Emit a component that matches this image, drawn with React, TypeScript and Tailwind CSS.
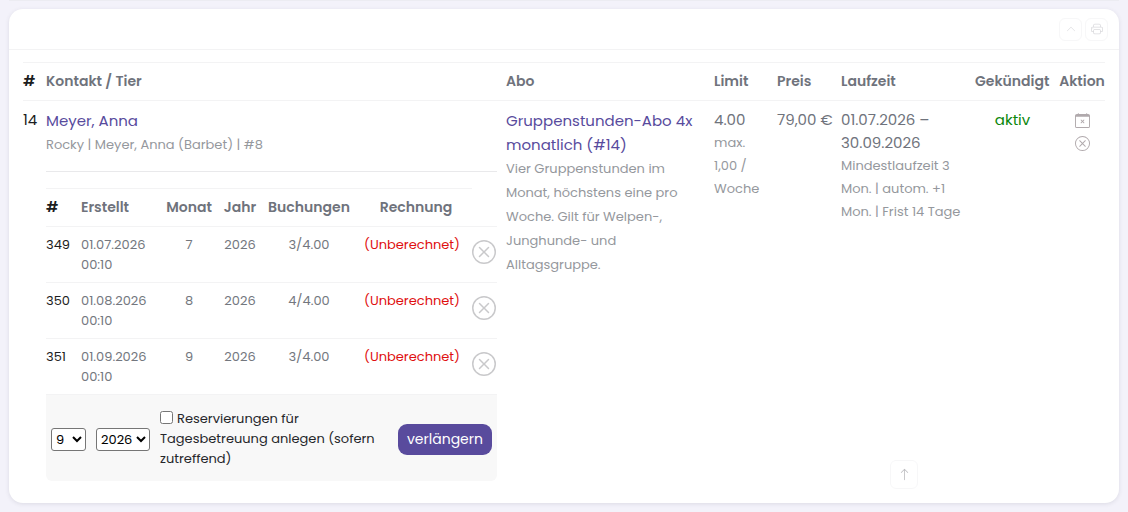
import React from "react";

type Booking = {
  id: number;
  date: string;
  time: string;
  month: number;
  year: number;
  used: string;
};

const bookings: Booking[] = [
  { id: 349, date: "01.07.2026", time: "00:10", month: 7, year: 2026, used: "3/4.00" },
  { id: 350, date: "01.08.2026", time: "00:10", month: 8, year: 2026, used: "4/4.00" },
  { id: 351, date: "01.09.2026", time: "00:10", month: 9, year: 2026, used: "3/4.00" },
];

function CircleX({ className }: { className: string }) {
  return (
    <svg className={className} viewBox="0 0 16 16" fill="currentColor" aria-hidden="true">
      <path d="M8 15A7 7 0 1 1 8 1a7 7 0 0 1 0 14m0 1A8 8 0 1 0 8 0a8 8 0 0 0 0 16" />
      <path d="M4.646 4.646a.5.5 0 0 1 .708 0L8 7.293l2.646-2.647a.5.5 0 0 1 .708.708L8.707 8l2.647 2.646a.5.5 0 0 1-.708.708L8 8.707l-2.646 2.647a.5.5 0 0 1-.708-.708L7.293 8 4.646 5.354a.5.5 0 0 1 0-.708" />
    </svg>
  );
}

function CalendarX({ className }: { className: string }) {
  return (
    <svg className={className} viewBox="0 0 16 16" fill="currentColor" aria-hidden="true">
      <path d="M6.146 7.146a.5.5 0 0 1 .708 0L8 8.293l1.146-1.147a.5.5 0 1 1 .708.708L8.707 9l1.147 1.146a.5.5 0 0 1-.708.708L8 9.707l-1.146 1.147a.5.5 0 0 1-.708-.708L7.293 9 6.146 7.854a.5.5 0 0 1 0-.708" />
      <path d="M3.5 0a.5.5 0 0 1 .5.5V1h8V.5a.5.5 0 0 1 1 0V1h1a2 2 0 0 1 2 2v11a2 2 0 0 1-2 2H2a2 2 0 0 1-2-2V3a2 2 0 0 1 2-2h1V.5a.5.5 0 0 1 .5-.5M1 4v10a1 1 0 0 0 1 1h12a1 1 0 0 0 1-1V4z" />
    </svg>
  );
}

function Printer({ className }: { className: string }) {
  return (
    <svg className={className} viewBox="0 0 16 16" fill="currentColor" aria-hidden="true">
      <path d="M2.5 8a.5.5 0 1 0 0-1 .5.5 0 0 0 0 1" />
      <path d="M5 1a2 2 0 0 0-2 2v2H2a2 2 0 0 0-2 2v3a2 2 0 0 0 2 2h1v1a2 2 0 0 0 2 2h6a2 2 0 0 0 2-2v-1h1a2 2 0 0 0 2-2V7a2 2 0 0 0-2-2h-1V3a2 2 0 0 0-2-2zM4 3a1 1 0 0 1 1-1h6a1 1 0 0 1 1 1v2H4zm1 5a2 2 0 0 0-2 2v1H2a1 1 0 0 1-1-1V7a1 1 0 0 1 1-1h12a1 1 0 0 1 1 1v3a1 1 0 0 1-1 1h-1v-1a2 2 0 0 0-2-2zm7 2v3a1 1 0 0 1-1 1H5a1 1 0 0 1-1-1v-3a1 1 0 0 1 1-1h6a1 1 0 0 1 1 1" />
    </svg>
  );
}

function ChevronUp({ className }: { className: string }) {
  return (
    <svg className={className} viewBox="0 0 16 16" fill="currentColor" aria-hidden="true">
      <path d="M7.646 4.646a.5.5 0 0 1 .708 0l6 6a.5.5 0 0 1-.708.708L8 5.707l-5.646 5.647a.5.5 0 0 1-.708-.708z" />
    </svg>
  );
}

function ArrowUp({ className }: { className: string }) {
  return (
    <svg className={className} viewBox="0 0 16 16" fill="currentColor" aria-hidden="true">
      <path d="M8 15a.5.5 0 0 0 .5-.5V2.707l3.146 3.147a.5.5 0 0 0 .708-.708l-4-4a.5.5 0 0 0-.708 0l-4 4a.5.5 0 1 0 .708.708L7.5 2.707V14.5a.5.5 0 0 0 .5.5" />
    </svg>
  );
}

function BookingTable() {
  return (
    <table className="w-full table-fixed border-collapse text-[13px] leading-5 text-[#73777e]">
      <colgroup>
        <col className="w-[35px]" />
        <col />
        <col className="w-[66px]" />
        <col className="w-[36px]" />
        <col className="w-[102px]" />
        <col className="w-[112px]" />
        <col className="w-[25px]" />
      </colgroup>
      <thead>
        <tr className="h-[38px] text-center text-sm text-[#6f737c]">
          <th className="border-y border-[#f3f3f4] p-0 pb-0.5 text-left font-semibold text-[#1c1d21]">#</th>
          <th className="border-y border-[#f3f3f4] p-0 pb-0.5 text-left font-semibold">Erstellt</th>
          <th className="border-y border-[#f3f3f4] p-0 pb-0.5 font-semibold">Monat</th>
          <th className="border-y border-[#f3f3f4] p-0 pb-0.5 font-semibold">Jahr</th>
          <th className="border-y border-[#f3f3f4] p-0 pb-0.5 font-semibold">Buchungen</th>
          <th className="border-y border-[#f3f3f4] p-0 pb-0.5 font-semibold">Rechnung</th>
          <td className="border-b border-[#f3f3f4] p-0" />
        </tr>
      </thead>
      <tbody>
        {bookings.map((b) => (
          <tr key={b.id} className="border-b border-[#f3f3f4] text-center align-top">
            <td className="pt-2 pb-[7px] text-left text-[#1c1d21]">{b.id}</td>
            <td className="pt-2 pb-[7px] text-left">
              {b.date}
              <br />
              {b.time}
            </td>
            <td className="pt-2 pb-[7px]">{b.month}</td>
            <td className="pt-2 pb-[7px]">{b.year}</td>
            <td className="pt-2 pb-[7px]">{b.used}</td>
            <td className="pt-2 pr-2 pb-[7px] text-[#e01010]">(Unberechnet)</td>
            <td className="pt-[13px]">
              <button type="button" aria-label={`Buchung ${b.id} löschen`} className="block text-[#c9c9cb]">
                <CircleX className="size-6" />
              </button>
            </td>
          </tr>
        ))}
      </tbody>
    </table>
  );
}

function ExtendForm() {
  return (
    <form
      className="flex items-center rounded-b-md bg-[#f8f8f8] px-[5px] pt-[14px] pb-3 text-[13px] leading-5 text-[#26272b]"
      onSubmit={(e) => e.preventDefault()}
    >
      <select
        aria-label="Monat"
        defaultValue="9"
        className="h-[23px] w-[35px] rounded-[3px] border border-[#767676] bg-white text-[13px] text-black"
      >
        <option>7</option>
        <option>8</option>
        <option>9</option>
      </select>
      <select
        aria-label="Jahr"
        defaultValue="2026"
        className="ml-[10px] h-[23px] w-[54px] rounded-[3px] border border-[#767676] bg-white text-[13px] text-black"
      >
        <option>2026</option>
        <option>2027</option>
      </select>
      <label className="ml-[10px] min-w-0 flex-1 pr-4">
        <input type="checkbox" className="mr-1 size-[13px] align-[-1px]" />
        Reservierungen für
        <br />
        Tagesbetreuung anlegen (sofern zutreffend)
      </label>
      <button type="submit" className="h-[31px] w-[94px] rounded-[9px] bg-[#594b9d] text-sm text-white">
        verlängern
      </button>
    </form>
  );
}

export default function App() {
  return (
    <div className="min-h-screen bg-[#f3f2fa] px-[9px] pb-[9px] font-[Poppins,Inter,sans-serif]">
      <div className="h-px bg-[#ececf2]" />
      <main className="mt-2 rounded-[14px] bg-white pb-[22px] shadow-[0_1px_4px_rgba(60,60,70,0.12)]">
        <header className="flex h-[41px] items-center justify-end gap-[3px] border-b border-[#f3f3f4] pr-[11px]">
          <button
            type="button"
            aria-label="Einklappen"
            className="flex size-[23px] items-center justify-center rounded-md border border-[#f7f7f8] text-[#dadadd]"
          >
            <ChevronUp className="size-[10px]" />
          </button>
          <button
            type="button"
            aria-label="Drucken"
            className="flex size-[23px] items-center justify-center rounded-md border border-[#f7f7f8] text-[#dadadd]"
          >
            <Printer className="size-3" />
          </button>
        </header>

        <div className="px-[14px] pt-3">
          <table className="w-full table-fixed border-collapse text-left text-[15px] leading-[23px] text-[#6f737c]">
            <colgroup>
              <col className="w-[23px]" />
              <col />
              <col className="w-[208px]" />
              <col className="w-[63px]" />
              <col className="w-[64px]" />
              <col className="w-[134px]" />
              <col className="w-[84px]" />
              <col className="w-[46px]" />
            </colgroup>
            <thead>
              <tr className="h-[38px] border-y border-[#f3f3f4] text-sm">
                <th className="p-0 pb-0.5 font-semibold text-[#1c1d21]">#</th>
                <th className="p-0 pb-0.5 font-semibold">Kontakt / Tier</th>
                <th className="p-0 pb-0.5 font-semibold">Abo</th>
                <th className="p-0 pb-0.5 font-semibold">Limit</th>
                <th className="p-0 pb-0.5 font-semibold">Preis</th>
                <th className="p-0 pb-0.5 font-semibold">Laufzeit</th>
                <th className="p-0 pb-0.5 font-semibold">Gekündigt</th>
                <th className="p-0 pb-0.5 text-center font-semibold whitespace-nowrap">Aktion</th>
              </tr>
            </thead>
            <tbody>
              <tr className="align-top">
                <td className="pt-[7px] text-[#1c1d21]">14</td>
                <td className="pt-2 pr-[9px]">
                  <a href="#kontakt" className="block leading-6 text-[#584b9d]">
                    Meyer, Anna
                  </a>
                  <div className="text-[13px] leading-6 text-[#95989d]">Rocky | Meyer, Anna (Barbet) | #8</div>
                  <hr className="mt-[14px] mb-4 border-[#e9e9eb]" />
                  <BookingTable />
                  <ExtendForm />
                </td>
                <td className="pt-2 pr-2 leading-6">
                  <a href="#abo" className="block text-[#584b9d]">
                    Gruppenstunden-Abo 4x monatlich (#14)
                  </a>
                  <div className="text-[13px] text-[#95989d]">
                    Vier Gruppenstunden im
                    <br />
                    Monat, höchstens eine pro
                    <br />
                    Woche. Gilt für Welpen-,
                    <br />
                    Junghunde- und
                    <br />
                    Alltagsgruppe.
                  </div>
                </td>
                <td className="pt-[7px]">
                  4.00
                  <div className="text-[13px] text-[#95989d]">
                    max.
                    <br />
                    1,00 /
                    <br />
                    Woche
                  </div>
                </td>
                <td className="pt-[7px] whitespace-nowrap">79,00 €</td>
                <td className="pt-[7px]">
                  01.07.2026 –
                  <br />
                  30.09.2026
                  <div className="text-[13px] text-[#95989d]">
                    Mindestlaufzeit 3
                    <br />
                    Mon. | autom. +1
                    <br />
                    Mon. | Frist 14 Tage
                  </div>
                </td>
                <td className="pt-[7px] pr-[9px] text-center text-[#0b870b]">aktiv</td>
                <td className="pt-3">
                  <div className="flex flex-col items-center gap-2 text-[#b0a9ac]">
                    <button type="button" aria-label="Abo kündigen">
                      <CalendarX className="size-[15px]" />
                    </button>
                    <button type="button" aria-label="Abo löschen">
                      <CircleX className="size-[15px]" />
                    </button>
                  </div>
                </td>
              </tr>
            </tbody>
          </table>
        </div>
      </main>

      <button
        type="button"
        aria-label="Nach oben"
        className="fixed right-[210px] bottom-[23px] flex h-[29px] w-7 items-center justify-center rounded-md border border-[#f7f7f8] bg-white text-[#bdbdc0]"
      >
        <ArrowUp className="size-[13px]" />
      </button>
    </div>
  );
}
